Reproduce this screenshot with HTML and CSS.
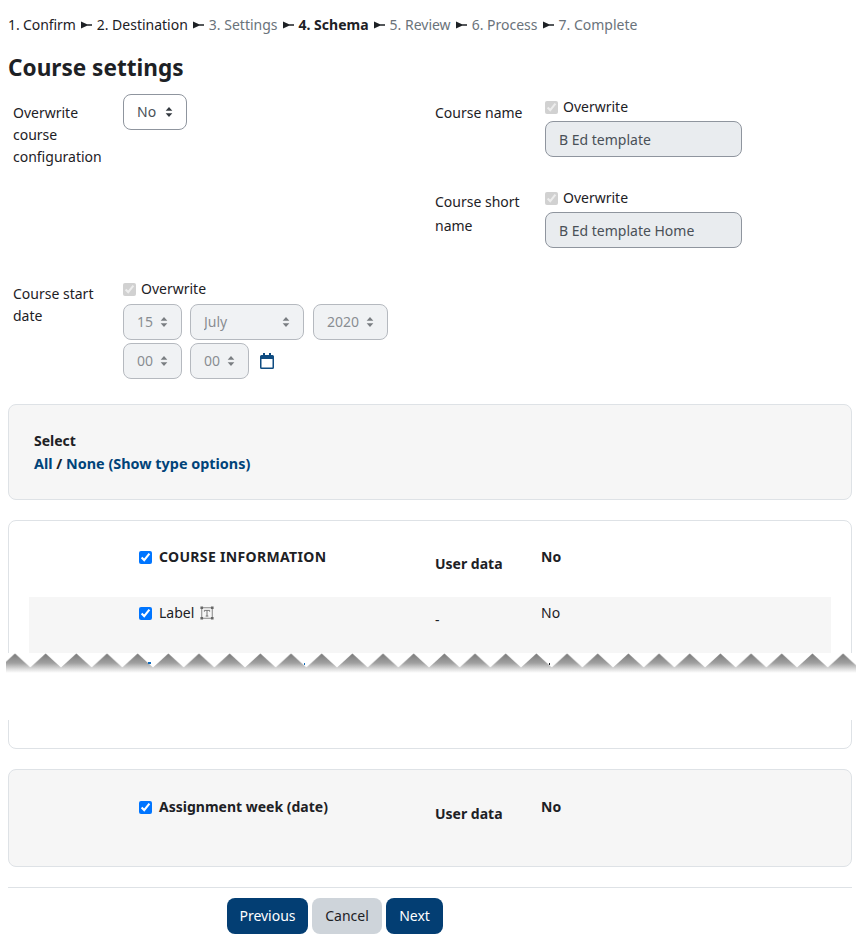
FILE: index.html
```html
<!DOCTYPE html>
<html lang="en">
<head>
<meta charset="utf-8">
<title>Course settings</title>
<link rel="stylesheet" href="styles.css">
</head>
<body>
<nav class="steps">
  <span class="step done first">1. Confirm</span><svg class="sep" viewBox="0 0 11 8"><path d="M0 0.500 L6 3.200 H11 V4.800 H6 L0 7.500 Z"/></svg>
  <span class="step done">2. Destination</span><svg class="sep" viewBox="0 0 11 8"><path d="M0 0.500 L6 3.200 H11 V4.800 H6 L0 7.500 Z"/></svg>
  <span class="step">3. Settings</span><svg class="sep" viewBox="0 0 11 8"><path d="M0 0.500 L6 3.200 H11 V4.800 H6 L0 7.500 Z"/></svg>
  <span class="step current">4. Schema</span><svg class="sep" viewBox="0 0 11 8"><path d="M0 0.500 L6 3.200 H11 V4.800 H6 L0 7.500 Z"/></svg>
  <span class="step">5. Review</span><svg class="sep" viewBox="0 0 11 8"><path d="M0 0.500 L6 3.200 H11 V4.800 H6 L0 7.500 Z"/></svg>
  <span class="step">6. Process</span><svg class="sep" viewBox="0 0 11 8"><path d="M0 0.500 L6 3.200 H11 V4.800 H6 L0 7.500 Z"/></svg>
  <span class="step">7. Complete</span>
</nav>
<h2 class="title">Course settings</h2>

<form class="settings">
  <div class="columns">
    <div class="field field-config">
      <label class="flabel">Overwrite course configuration</label>
      <div class="fcontrol"><select class="sel sel-no"><option>No</option></select></div>
    </div>
    <div class="stack">
      <div class="field field-name">
        <label class="flabel">Course name</label>
        <div class="fcontrol">
          <label class="over"><input type="checkbox" checked disabled> Overwrite</label>
          <input class="text" type="text" value="B Ed template" disabled>
        </div>
      </div>
      <div class="field field-short">
        <label class="flabel">Course short name</label>
        <div class="fcontrol">
          <label class="over"><input type="checkbox" checked disabled> Overwrite</label>
          <input class="text" type="text" value="B Ed template Home" disabled>
        </div>
      </div>
    </div>
  </div>
  <div class="field field-date">
    <label class="flabel">Course start date</label>
    <div class="fcontrol">
      <label class="over"><input type="checkbox" checked disabled> Overwrite</label>
      <div class="date-row">
        <select class="sel sel-2" disabled><option>15</option></select>
        <select class="sel sel-month" disabled><option>July</option></select>
        <select class="sel sel-year" disabled><option>2020</option></select>
      </div>
      <div class="date-row">
        <select class="sel sel-2" disabled><option>00</option></select>
        <select class="sel sel-2" disabled><option>00</option></select>
        <svg class="cal" viewBox="0 0 14 16"><path fill="#0f4c81" d="M3 0h2v2h4V0h2v2h1.500A1.500 1.500 0 0 1 14 3.500v11a1.500 1.500 0 0 1-1.500 1.500h-11A1.500 1.500 0 0 1 0 14.500v-11A1.500 1.500 0 0 1 1.500 2H3zM1.500 6v8.500h11V6z"/></svg>
      </div>
    </div>
  </div>
</form>

<section class="card card-select">
  <div class="sel-title">Select</div>
  <div class="sel-links"><a href="#">All</a> / <a href="#">None</a> <a href="#">(Show type options)</a></div>
</section>

<section class="card card-section">
  <div class="row row-head">
    <label class="item item-upper"><input type="checkbox" checked> COURSE INFORMATION</label>
    <div class="udata">User data</div>
    <div class="uval">No</div>
  </div>
  <div class="row row-activity">
    <label class="item"><input type="checkbox" checked> Label
      <svg class="modicon" viewBox="0 0 16 16"><path fill="none" stroke="#777" d="M2 2h12v12H2z"/><path fill="#666" d="M0.500 0.500h3v3h-3zM12.500 0.500h3v3h-3zM0.500 12.500h3v3h-3zM12.500 12.500h3v3h-3z"/><path fill="none" stroke="#666" d="M5 6.500V5h6v1.500M8 5v6.500M6.500 11.500h3"/></svg>
    </label>
    <div class="udash">-</div>
    <div class="uval">No</div>
  </div>
</section>

<section class="card card-last">
  <div class="row row-head">
    <label class="item"><input type="checkbox" checked> Assignment week (date)</label>
    <div class="udata">User data</div>
    <div class="uval">No</div>
  </div>
</section>

<hr class="rule">
<div class="actions">
  <button class="btn primary btn-prev" type="button">Previous</button>
  <button class="btn secondary btn-cancel" type="button">Cancel</button>
  <button class="btn primary btn-next" type="button">Next</button>
</div>

<div class="tear">
  <svg class="tear-edge" width="860" height="22" viewBox="0 0 860 22">
    <defs>
      <linearGradient id="fade" gradientUnits="userSpaceOnUse" x1="0" y1="0" x2="0" y2="20">
        <stop offset="0" stop-color="#777777"/>
        <stop offset="0.5" stop-color="#a0a0a0"/>
        <stop offset="0.8" stop-color="#dddddd"/>
        <stop offset="1" stop-color="#ffffff"/>
      </linearGradient>
      <pattern id="teeth" width="30.670" height="22" patternUnits="userSpaceOnUse" x="-0.330">
        <path d="M0 14.500 L15.330 0.500 L30.670 14.500 V20 H0 Z" fill="url(#fade)"/>
      </pattern>
    </defs>
    <rect x="6" width="850" height="22" fill="url(#teeth)"/>
    <path fill="#0f6cbf" d="M148 9h3v2h-3zM304 10h1v2h-1z"/>
    <path fill="#1d2125" d="M549 10h1v2h-1z"/>
  </svg>
</div>
</body>
</html>
```

FILE: styles.css
```css
* { box-sizing: border-box; }
html, body { margin: 0; padding: 0; }
body {
  position: relative;
  width: 860px;
  height: 941px;
  padding: 0 8px;
  overflow: hidden;
  background: #fff;
  color: #1d2125;
  font-family: "Noto Sans", "Open Sans", sans-serif;
  font-size: 14px;
  line-height: 22px;
}
input, select, button { font: inherit; }

.steps {
  display: flex;
  align-items: center;
  height: 22px;
  margin-top: 14px;
  color: #6a737b;
}
.step { white-space: nowrap; }
.step.first { letter-spacing: -0.1px; }
.step.done { color: #1d2125; }
.step.current { color: #1d2125; font-weight: 700; }
.sep { width: 11px; height: 8px; margin: 0 5px; fill: #1d2125; flex: none; }

.title {
  margin: 18px 0 0;
  font-size: 22.6px;
  line-height: 28px;
  font-weight: 700;
}

.settings { margin-top: 12px; }
.columns { display: grid; grid-template-columns: 422px 1fr; }
.stack { display: flex; flex-direction: column; }
.field { display: flex; }
.flabel { width: 115px; padding: 8px 5px 0; flex: none; }
.fcontrol { flex: none; }
.field-name .fcontrol { padding-top: 2px; }
.field-short { margin-top: 30px; }
.field-short .flabel { padding-top: 3px; line-height: 24px; }
.field-date { margin-top: 30px; }
.field-date .flabel { padding-top: 5px; }

.over { display: flex; align-items: center; gap: 5px; height: 22px; }
.over input { width: 13px; height: 13px; margin: 0; }
.sel {
  appearance: none;
  height: 36px;
  padding: 0 25px 0 13px;
  border: 1px solid #8f959e;
  border-radius: 8px;
  color: #495057;
  background: #fff url("data:image/svg+xml,%3Csvg xmlns='http://www.w3.org/2000/svg' viewBox='0 0 8 12'%3E%3Cpath fill='%23343a40' d='M4 0l4 4.500H0zM4 12L0 7.500h8z'/%3E%3C/svg%3E") no-repeat right 13px center / 8px 10px;
}
.sel:disabled { background-color: #e9ecef; opacity: 0.65; }
.sel-no { width: 64px; }
.sel-2 { width: 59px; }
.sel-month { width: 114px; }
.sel-year { width: 75px; margin-left: 1px; }
.date-row { display: flex; align-items: center; gap: 8px; margin-top: 3px; }
.over + .date-row { margin-top: 4px; }
.cal { width: 14px; height: 16px; margin-left: 3px; }

.text {
  display: block;
  width: 197px;
  height: 36px;
  margin-top: 3px;
  padding: 0 13px;
  border: 1px solid #8f959e;
  border-radius: 8px;
  color: #495057;
  background: #e9ecef;
}

.card {
  border: 1px solid #dee2e6;
  border-radius: 8px;
}
.card-select {
  height: 96px;
  margin-top: 25px;
  padding: 25px;
  background: #f6f6f6;
}
.sel-title { font-weight: 700; }
.sel-links { margin-top: 1px; font-size: 14.4px; font-weight: 700; color: #1d2125; }
.sel-links a { color: #004379; text-decoration: none; }

.card-section {
  height: 229px;
  margin-top: 20px;
  padding: 0 20px;
}
.card-last {
  height: 98px;
  margin-top: 20px;
  padding: 1px 20px 0;
  background: #f6f6f6;
}
.row { display: grid; grid-template-columns: 406px 106px 1fr; }
.item { display: flex; align-items: center; gap: 7px; height: 22px; margin-left: 110px; white-space: nowrap; }
.item-upper { letter-spacing: 0.33px; }
.item input { width: 13px; height: 13px; margin: 0; }
.row-head { height: 76px; padding-top: 25px; font-weight: 700; }
.udata { padding-top: 7px; }
.row-activity { height: 56px; padding-top: 5px; background: #f6f6f6; }
.udash { padding-top: 7px; }
.modicon { width: 14px; height: 14px; margin-left: -1px; }

.rule { height: 1px; margin: 20px 0 0; border: 0; background: #dee2e6; }
.actions { display: flex; gap: 4px; margin: 10px 0 0 219px; }
.btn { height: 36px; padding: 0; border: 0; border-radius: 8px; }
.btn-prev { width: 81px; }
.btn-cancel { width: 70px; }
.btn-next { width: 57px; }
.primary { color: #fff; background: #033e73; }
.secondary { color: #1d2125; background: #ced4da; }

.tear {
  position: absolute;
  left: 0;
  top: 653px;
  width: 860px;
  height: 67px;
  background: #fff;
}
.tear-edge { display: block; }
```
